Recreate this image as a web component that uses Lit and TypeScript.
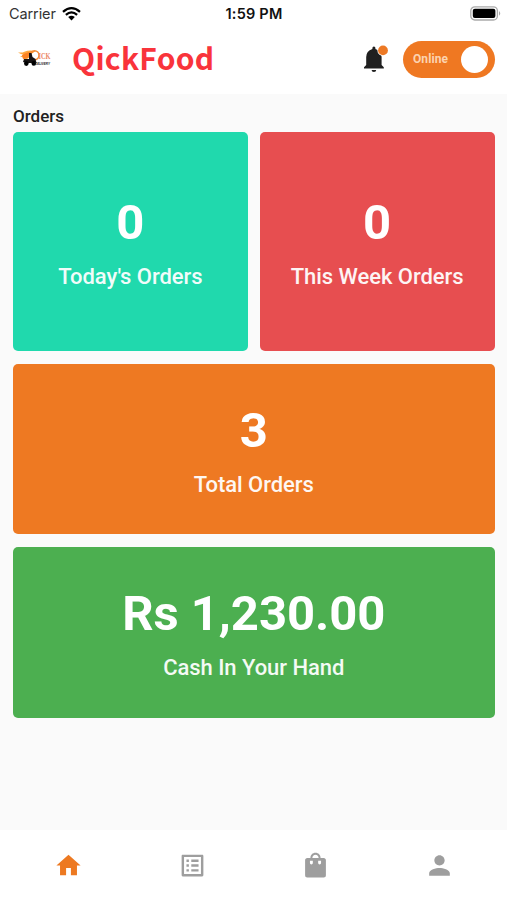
import { LitElement, html, css } from "lit";
import { customElement, property } from "lit/decorators.js";

@customElement("stat-card")
class StatCard extends LitElement {
  @property() value = "";
  @property() label = "";
  static styles = css`
    :host { display: flex; flex-direction: column; align-items: center; justify-content: center; border-radius: 5px; padding-top: 1px; color: #fff; box-sizing: border-box; white-space: nowrap; }
    .value { font-size: 49px; font-weight: 700; line-height: 58px; letter-spacing: -0.05px; }
    .label { font-size: 22px; font-weight: 500; line-height: 26px; margin-top: 12px; opacity: 0.94; letter-spacing: -0.05px; }
  `;
  render() {
    return html`<div class="value">${this.value}</div><div class="label">${this.label}</div>`;
  }
}

@customElement("app-root")
class AppRoot extends LitElement {
  static styles = css`
    :host { display: flex; flex-direction: column; width: 507px; height: 900px; background: #fafafa; font-family: Roboto, sans-serif; color: #212121; overflow: hidden; }
    svg { display: block; flex: none; overflow: visible; }
    .status { height: 27px; background: #fff; display: grid; grid-template-columns: 1fr auto 1fr; align-items: center; padding: 0 8px 0 9px; font-family: Inter, sans-serif; font-size: 14.5px; box-sizing: border-box; }
    .carrier { display: flex; align-items: center; gap: 6px; color: #333; letter-spacing: -0.1px; }
    .time { font-weight: 600; font-size: 14.5px; color: #111; letter-spacing: 0.2px; }
    .battery { justify-self: end; margin-right: -3px; }
    .header { height: 67px; background: #fff; display: flex; align-items: center; padding: 0 12px 3px 17px; box-sizing: border-box; }
    .brand { font-family: "Noto Sans CJK SC", sans-serif; font-weight: 700; font-size: 30px; line-height: 40px; letter-spacing: 0.3px; color: #f9343b; margin: 0 0 4px 19px; }
    .bell { margin-left: auto; }
    .toggle { margin-left: 13px; width: 92px; height: 37px; border-radius: 19px; background: #ef7822; display: flex; align-items: center; justify-content: space-between; padding: 0 7px 0 10px; box-sizing: border-box; }
    .toggle-label { font-size: 12px; font-weight: 700; color: #fcd3b0; letter-spacing: 0.1px; }
    .knob { width: 27px; height: 27px; border-radius: 50%; background: #fff; }
    .content { flex: 1; padding: 12px 12.5px 0 13px; }
    .title { font-size: 17px; font-weight: 500; line-height: 20px; margin: 0; height: 26px; }
    .cards { display: grid; grid-template-columns: 1fr 1fr; grid-template-rows: 219.4px 170.6px 171px; gap: 12.5px 12px; }
    .today { background: #20d9ad; }
    .week { background: #e74e50; }
    .total { background: #ee7922; grid-column: span 2; }
    .cash { background: #4caf50; grid-column: span 2; }
    .nav { height: 70px; background: #fff; display: grid; grid-template-columns: repeat(4, 1fr); align-items: center; justify-items: center; padding: 0 6px 0 7px; }
  `;
  render() {
    return html`
      <div class="status">
        <div class="carrier"><span>Carrier</span>
          <svg width="19" height="14" viewBox="0 0 19 14"><path d="M1 4.8Q9.5-2.6 18 4.8M3.9 7.8Q9.5 3 15.1 7.8" fill="none" stroke="#000" stroke-width="2.3"/><path d="M6.2 10.1Q9.5 7.4 12.8 10.1L9.5 13.5Z"/></svg>
        </div>
        <span class="time">1:59 PM</span>
        <svg class="battery" width="32" height="15" viewBox="0 0 32 15"><rect x=".8" y=".8" width="26.6" height="13.2" rx="4" fill="#fff" stroke="#aaa" stroke-width="1.3"/><rect x="2.8" y="2.8" width="22.6" height="9.2" rx="2"/><path d="M29 5Q31.5 7.4 29 9.8Z" fill="#aaa"/></svg>
      </div>
      <div class="header">
        <svg width="36" height="22" viewBox="0 0 36 22">
          <path d="M1 4.5Q5 5 8 3.4Q12 1.6 19 3Q14 5 13 9L7 13Q8 9 3 8.8L7 6.8Q4 6.5 1 4.5Z" fill="#fda83f"/>
          <path d="M5 7Q11 3 18 3.5Q12 6 11 10L6 11Z" fill="#fa8224"/>
          <circle cx="17.5" cy="7.2" r="4.5" fill="none" stroke="#f28a35" stroke-width="1.6"/>
          <text x="21.5" y="11.2" font-family="Liberation Serif, serif" font-weight="700" font-size="9" textLength="12" lengthAdjust="spacingAndGlyphs" fill="#ec8565">ICK</text>
          <path d="M12 5h2.5l1 4 3 2 1 4H9l-3-1 1-3h5Z" fill="#171313"/>
          <circle cx="9.3" cy="15.6" r="2.3"/><circle cx="16.8" cy="15.4" r="2.3"/>
          <text x="18" y="16.8" font-family="Liberation Sans, sans-serif" font-weight="700" font-style="italic" font-size="4.2" textLength="15" lengthAdjust="spacingAndGlyphs" fill="#222">DELIVERY</text>
        </svg>
        <div class="brand">QickFood</div>
        <svg class="bell" width="26" height="30" viewBox="0 0 26 30"><path d="M0 24.6v-1.4l2.2-2.2V13Q2.2 6.8 8.4 4.9V3.9a1.5 1.5 0 0 1 3 0v1Q17.6 6.8 17.6 13v8l2.2 2.2v1.4ZM7.6 26h4.6a2.3 2.1 0 0 1-4.6 0Z" fill="#202020"/><circle cx="19" cy="6.4" r="5.6" fill="#fff"/><circle cx="19" cy="6.4" r="4.9" fill="#ed7925"/></svg>
        <div class="toggle"><span class="toggle-label">Online</span><span class="knob"></span></div>
      </div>
      <div class="content">
        <h2 class="title">Orders</h2>
        <div class="cards">
          <stat-card class="today" value="0" label="Today's Orders"></stat-card>
          <stat-card class="week" value="0" label="This Week Orders"></stat-card>
          <stat-card class="total" value="3" label="Total Orders"></stat-card>
          <stat-card class="cash" value="Rs 1,230.00" label="Cash In Your Hand"></stat-card>
        </div>
      </div>
      <div class="nav">
        <svg width="29" height="29" viewBox="0 0 24 24" fill="#ed7921"><path d="M10 20v-6h4v6h5v-8h3L12 3 2 12h3v8z"/></svg>
        <svg width="29" height="29" viewBox="0 0 24 24" fill="#9e9e9e"><path d="M19 5v14H5V5h14m1.1-2H3.9c-.5 0-.9.4-.9.9v16.2c0 .4.4.9.9.9h16.2c.4 0 .9-.5.9-.9V3.9c0-.5-.5-.9-.9-.9zM11 7h6v2h-6V7zm0 4h6v2h-6v-2zm0 4h6v2h-6zM7 7h2v2H7zm0 4h2v2H7zm0 4h2v2H7z"/></svg>
        <svg width="29" height="29" viewBox="0 0 24 24" fill="#9e9e9e"><path fill-rule="evenodd" d="M18.8 5.8H16.2C16.2 3.3 14.4 1.5 12 1.5S7.8 3.3 7.8 5.8H5.2C4.1 5.8 3.4 6.6 3.4 7.6v12.5c0 1.1.7 1.9 1.8 1.9h13.6c1.1 0 1.8-.8 1.8-1.9V7.6c0-1-.7-1.8-1.8-1.8ZM12 3.1c1.5 0 2.6 1.2 2.6 2.7H9.4C9.4 4.3 10.5 3.1 12 3.1ZM7.4 8h2.4v1.9a1.2 1.2 0 0 1-2.4 0ZM14.2 8h2.4v1.9a1.2 1.2 0 0 1-2.4 0Z"/></svg>
        <svg width="31" height="31" viewBox="0 0 24 24" fill="#9e9e9e"><path d="M12 12c2.2 0 4-1.8 4-4s-1.8-4-4-4-4 1.8-4 4 1.8 4 4 4zm0 2c-2.7 0-8 1.3-8 4v2h16v-2c0-2.7-5.3-4-8-4z"/></svg>
      </div>`;
  }
}
